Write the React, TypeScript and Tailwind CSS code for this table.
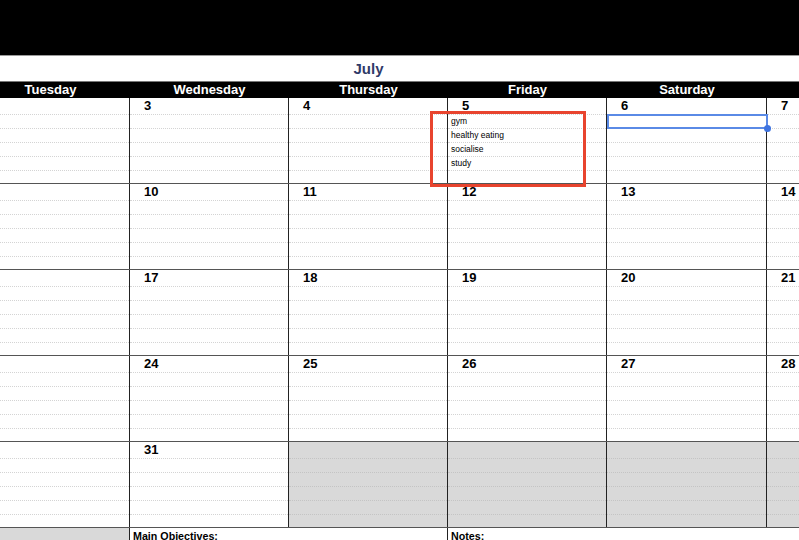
import React from "react";

const days = ["Tuesday", "Wednesday", "Thursday", "Friday", "Saturday", ""];
// Tuesday dates sit off-screen to the left, so they are left blank
const weeks: (number | null | "")[][] = [
  ["", 3, 4, 5, 6, 7],
  ["", 10, 11, 12, 13, 14],
  ["", 17, 18, 19, 20, 21],
  ["", 24, 25, 26, 27, 28],
  ["", 31, null, null, null, null],
];
const events = ["gym", "healthy eating", "socialise", "study"];
const cols = "grid grid-cols-[159px_159px_159px_159px_160px_159px]";

function DayCell({ date, notes }: { date: number | null | ""; notes?: string[] }) {
  const grey = date === null;
  const dot = grey ? "border-[#c4c4c4]" : "border-[#d4d4d4]";
  return (
    <div className={`h-full border-r border-[#222] ${grey ? "bg-[#d9d9d9]" : "bg-white"}`}>
      <div className={`h-[17px] border-b border-dotted ${dot} pl-[14px] text-[13px] font-bold leading-[16px] text-black`}>
        {date ?? ""}
      </div>
      {[0, 1, 2, 3].map((i) => (
        <div
          key={i}
          className={`h-[14px] border-b border-dotted ${dot} pl-[3px] text-[8.5px] leading-[13px] text-black`}
        >
          {notes?.[i] ?? ""}
        </div>
      ))}
    </div>
  );
}

export default function App() {
  return (
    <div className="relative h-[540px] w-[799px] overflow-hidden bg-white font-['Liberation_Sans',Arial,sans-serif]">
      {/* top bar */}
      <div className="h-[55px] bg-black" />
      <div className="h-[1px] bg-[#9a9a9a]" />

      <div className="-ml-[29px] w-[955px]">
        {/* month title */}
        <div className={`${cols} h-[25px]`}>
          <div />
          <div />
          <div className="flex items-center justify-center pt-[2px] text-[15px] font-bold text-[#2f3a68]">
            July
          </div>
        </div>

        {/* day headers */}
        <div className={`${cols} h-[17px] border-t border-[#777] bg-black`}>
          {days.map((d, i) => (
            <div key={i} className="text-center text-[13px] font-bold leading-[16px] text-white">
              {d}
            </div>
          ))}
        </div>

        {/* weeks */}
        {weeks.map((w, wi) => (
          <div key={wi} className={`${cols} h-[86px] border-b border-[#555]`}>
            {w.map((d, di) => (
              <DayCell key={di} date={d} notes={wi === 0 && di === 3 ? events : undefined} />
            ))}
          </div>
        ))}

        {/* footer */}
        <div className="grid h-[20px] grid-cols-[159px_318px_478px]">
          <div className="border-r border-[#222] bg-[#d9d9d9]" />
          <div className="border-r border-[#222] pl-[3px] pt-[2px] text-[10.7px] font-bold leading-[12px] text-black">
            Main Objectives:
          </div>
          <div className="pl-[3px] pt-[2px] text-[10.7px] font-bold leading-[12px] text-black">
            Notes:
          </div>
        </div>
      </div>

      {/* highlight box */}
      <div className="absolute left-[430px] top-[111px] h-[76px] w-[156px] border-[3px] border-[#e8442e]" />

      {/* selected cell */}
      <div className="absolute left-[607px] top-[114px] h-[15px] w-[161px] border-2 border-[#5a8ae6]" />
      <div className="absolute left-[764px] top-[125px] h-[7px] w-[7px] rounded-full bg-[#3f74e0]" />
    </div>
  );
}
